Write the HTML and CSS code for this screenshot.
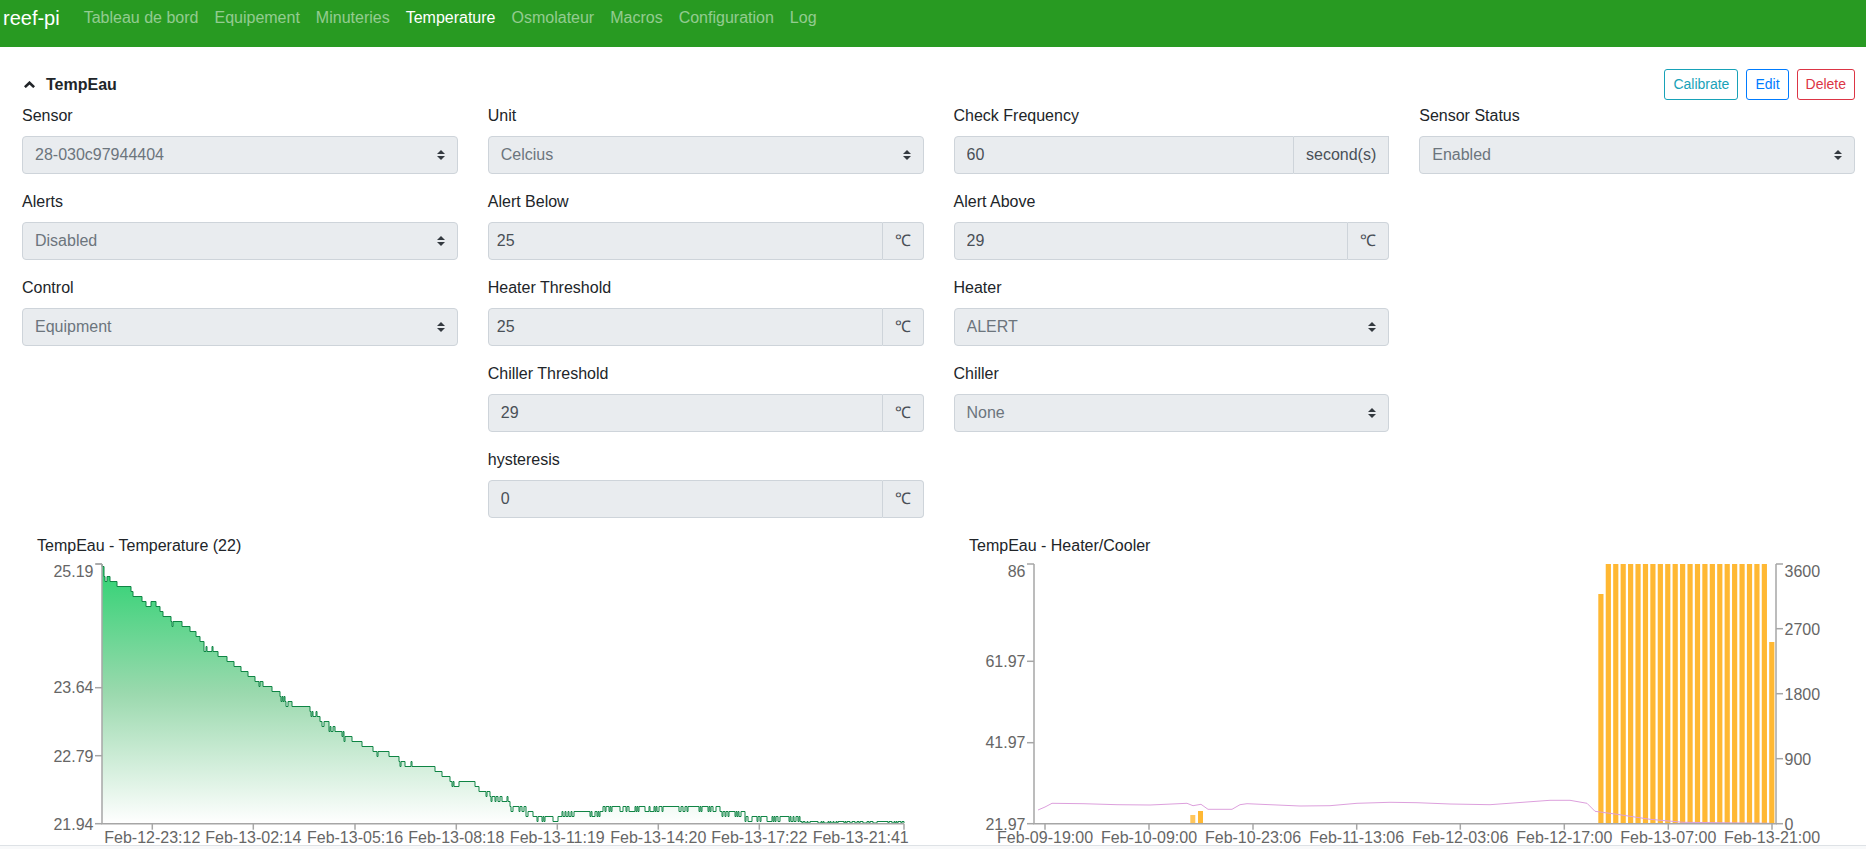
FILE: index.html
```html
<!DOCTYPE html>
<html lang="en">
<head>
    <meta charset="UTF-8">
    <meta name="viewport" content="width=device-width, initial-scale=1.0">
    <title>reef-pi</title>
    <link rel="stylesheet" href="styles.css">
</head>
<body>
    <nav class="navbar">
        <a class="brand">reef-pi</a>
        <a class="nav-link">Tableau de bord</a>
        <a class="nav-link">Equipement</a>
        <a class="nav-link">Minuteries</a>
        <a class="nav-link active">Temperature</a>
        <a class="nav-link">Osmolateur</a>
        <a class="nav-link">Macros</a>
        <a class="nav-link">Configuration</a>
        <a class="nav-link">Log</a>
    </nav>

    <div class="title-row">
        <div class="title">
            <svg class="chevron" viewBox="0 0 10 6"><path d="M0.8 5.4L5 1.4L9.2 5.4"/></svg>
            <b>TempEau</b>
        </div>
        <div class="actions">
            <button class="btn btn-info">Calibrate</button>
            <button class="btn btn-primary">Edit</button>
            <button class="btn btn-danger">Delete</button>
        </div>
    </div>

    <div class="form-grid">
        <div class="field">
            <label>Sensor</label>
            <select class="custom-select" disabled><option>28-030c97944404</option></select>
        </div>
        <div class="field">
            <label>Unit</label>
            <select class="custom-select" disabled><option>Celcius</option></select>
        </div>
        <div class="field">
            <label>Check Frequency</label>
            <div class="input-group">
                <input class="form-control" type="text" value="60" disabled>
                <span class="addon addon-square">second(s)</span>
            </div>
        </div>
        <div class="field">
            <label>Sensor Status</label>
            <select class="custom-select" disabled><option>Enabled</option></select>
        </div>

        <div class="field col-first">
            <label>Alerts</label>
            <select class="custom-select" disabled><option>Disabled</option></select>
        </div>
        <div class="field">
            <label>Alert Below</label>
            <div class="input-group">
                <input class="form-control tight" type="text" value="25" disabled>
                <span class="addon">℃</span>
            </div>
        </div>
        <div class="field">
            <label>Alert Above</label>
            <div class="input-group">
                <input class="form-control" type="text" value="29" disabled>
                <span class="addon">℃</span>
            </div>
        </div>

        <div class="field col-first">
            <label>Control</label>
            <select class="custom-select" disabled><option>Equipment</option></select>
        </div>
        <div class="field">
            <label>Heater Threshold</label>
            <div class="input-group">
                <input class="form-control tight" type="text" value="25" disabled>
                <span class="addon">℃</span>
            </div>
        </div>
        <div class="field">
            <label>Heater</label>
            <select class="custom-select" disabled><option>ALERT</option></select>
        </div>

        <div class="field col-second">
            <label>Chiller Threshold</label>
            <div class="input-group">
                <input class="form-control" type="text" value="29" disabled>
                <span class="addon">℃</span>
            </div>
        </div>
        <div class="field">
            <label>Chiller</label>
            <select class="custom-select" disabled><option>None</option></select>
        </div>

        <div class="field col-second">
            <label>hysteresis</label>
            <div class="input-group">
                <input class="form-control" type="text" value="0" disabled>
                <span class="addon">℃</span>
            </div>
        </div>
    </div>

    <div class="charts">
        <div class="chart chart-temp">
            <div class="chart-title">TempEau - Temperature (22)</div>
            <svg id="temp-chart" class="chart-svg" viewBox="37 557 932 287"></svg>
        </div>
        <div class="chart chart-control">
            <div class="chart-title">TempEau - Heater/Cooler</div>
            <svg id="control-chart" class="chart-svg" viewBox="969 557 897 287"></svg>
        </div>
    </div>

    <div class="page-footer"></div>

    <script src="charts.js"></script>
</body>
</html>
```
FILE: styles.css
```css
html, body {
    margin: 0;
    overflow: hidden;
}
body {
    font-family: "Liberation Sans", Arial, sans-serif;
    font-size: 16px;
    line-height: 24px;
    color: #212529;
    background-color: white;
}
.navbar {
    display: flex;
    align-items: flex-start;
    height: 47px;
    padding-left: 3px;
    background-color: #289a22;
}
.brand {
    font-size: 20px;
    line-height: 30px;
    padding-top: 3px;
    margin-right: 16px;
    color: white;
}
.nav-link {
    padding: 6px 8px;
    color: rgba(255,255,255,0.5);
}
.nav-link.active {
    color: white;
}
.title-row {
    display: flex;
    justify-content: space-between;
    align-items: center;
    padding: 22px 11px 4px 24px;
}
.title {
    display: flex;
    align-items: center;
    gap: 11px;
}
.chevron {
    width: 11px;
    height: 7px;
    fill: none;
    stroke: #212529;
    stroke-width: 2.4;
}
.actions {
    display: flex;
    gap: 8px;
}
.btn {
    font-family: inherit;
    font-size: 14px;
    line-height: 21px;
    padding: 4px 8px;
    background-color: white;
    border: 1px solid;
    border-radius: 3px;
}
.btn-info {
    color: #17a2b8;
    border-color: #17a2b8;
}
.btn-primary {
    color: #007bff;
    border-color: #007bff;
}
.btn-danger {
    color: #dc3545;
    border-color: #dc3545;
}
.form-grid {
    display: grid;
    grid-template-columns: repeat(4, 1fr);
    column-gap: 30px;
    padding: 0 11px 0 22px;
}
.col-first {
    grid-column-start: 1;
}
.col-second {
    grid-column-start: 2;
}
.field {
    margin-bottom: 16px;
    min-width: 0;
}
.field label {
    display: block;
    margin-bottom: 8px;
}
.custom-select, .form-control, .addon {
    box-sizing: border-box;
    height: 38px;
    font-family: inherit;
    font-size: 16px;
    line-height: 24px;
    background-color: #e9ecef;
    border: 1px solid #ced4da;
    opacity: 1;
}
.custom-select {
    display: block;
    width: 100%;
    padding: 6px 28px 6px 12px;
    color: #6c757d;
    border-radius: 4px;
    appearance: none;
    background-image: url("data:image/svg+xml,%3Csvg xmlns='http://www.w3.org/2000/svg' viewBox='0 0 4 5'%3E%3Cpath fill='%23343a40' d='M2 0L0 2h4zm0 5L0 3h4z'/%3E%3C/svg%3E");
    background-repeat: no-repeat;
    background-position: right 12px center;
    background-size: 8px 10px;
}
.input-group {
    display: flex;
}
.form-control {
    flex: 1;
    min-width: 0;
    padding: 6px 12px;
    color: #495057;
    border-radius: 4px 0 0 4px;
}
.form-control.tight {
    padding-left: 8px;
}
.addon {
    padding: 6px 12px;
    color: #495057;
    border-left: 0;
    border-radius: 0 4px 4px 0;
}
.addon-square {
    border-radius: 0;
}
.charts {
    display: flex;
    padding-left: 37px;
    height: 311px;
}
.chart {
    flex: none;
}
.chart-temp {
    width: 932px;
}
.chart-control {
    width: 897px;
}
.chart-title {
    height: 24px;
}
.chart-svg {
    display: block;
    width: 100%;
    height: 287px;
    font-size: 16px;
}
.axis-line {
    fill: none;
    stroke: #a6a6a6;
    stroke-width: 1.5;
}
.axis-label {
    fill: #666;
}
.page-footer {
    height: 5px;
    border-top: 1px solid #dee2e6;
    background-color: #f8f9fa;
}
```
FILE: charts.js
```js
const SVG_NS = 'http://www.w3.org/2000/svg';
const TOP = 563;
const BOTTOM = 822.7;

function add(svg, tag, attrs, text) {
    const el = document.createElementNS(SVG_NS, tag);
    Object.keys(attrs).forEach(key => el.setAttribute(key, attrs[key]));
    if (text !== undefined) el.textContent = text;
    svg.appendChild(el);
    return el;
}

function yLabels(svg, labels, axisX, side) {
    labels.forEach(([label, tickY, textY]) => {
        const tickEnd = axisX + side * 7;
        add(svg, 'path', { class: 'axis-line', d: `M${axisX} ${tickY}H${tickEnd}` });
        add(svg, 'text', {
            class: 'axis-label',
            x: axisX + side * 8.5,
            y: textY + 5.5,
            'text-anchor': side < 0 ? 'end' : 'start'
        }, label);
    });
}

function xLabels(svg, labels) {
    labels.forEach(([label, tickX, textX]) => {
        add(svg, 'path', { class: 'axis-line', d: `M${tickX} ${BOTTOM}V${BOTTOM + 6}` });
        add(svg, 'text', { class: 'axis-label', x: textX, y: 841.5, 'text-anchor': 'middle' }, label);
    });
}

// small seeded random so the noise of the sensor line is always the same
let seed = 42;
function rand() {
    seed = (seed * 16807) % 2147483647;
    return seed / 2147483647;
}

// rough shape of the temperature curve, the samples are quantized below
const TEMP_CURVE = [
    [102, 563], [105, 573], [115, 582], [132, 588], [133, 593], [143, 598], [157, 603],
    [163, 613], [172, 618], [183, 623], [193, 630], [203, 642], [220, 652], [227, 658],
    [240, 667], [248, 673], [263, 683], [277, 690], [292, 703], [312, 708], [322, 718],
    [335, 727], [350, 737], [367, 745], [390, 753], [403, 760], [437, 768], [447, 777],
    [477, 783], [480, 790], [507, 797], [510, 803], [523, 806], [537, 813], [557, 813],
    [573, 810], [600, 808], [613, 804], [633, 803], [673, 803], [687, 805], [717, 807],
    [747, 813], [788, 817], [813, 818], [904, 819]
];

function curveAt(x) {
    for (let i = 1; i < TEMP_CURVE.length; i++) {
        const [x0, y0] = TEMP_CURVE[i - 1];
        const [x1, y1] = TEMP_CURVE[i];
        if (x <= x1) {
            return y0 + (y1 - y0) * (x - x0) / (x1 - x0);
        }
    }
    return 819;
}

function drawTempChart() {
    const svg = document.getElementById('temp-chart');
    const defs = add(svg, 'defs', {});
    const grad = add(defs, 'linearGradient', {
        id: 'temp-fill', gradientUnits: 'userSpaceOnUse', x1: 0, y1: TOP, x2: 0, y2: BOTTOM
    });
    add(grad, 'stop', { offset: '0', 'stop-color': '#2dd272' });
    add(grad, 'stop', { offset: '0.5', 'stop-color': '#9bd9ae' });
    add(grad, 'stop', { offset: '1', 'stop-color': '#ffffff' });

    let line = 'M102 563';
    let burst = 0;
    for (let x = 102; x <= 904; x += 1) {
        const late = x > 470;
        let y = Math.round(curveAt(x) / 5) * 5 + 0.5;
        if (burst > 0) {
            burst--;
            if (rand() < 0.5) y += 5;
        } else if (rand() < (late ? 0.14 : 0.06)) {
            burst = 3 + Math.floor(rand() * (late ? 24 : 8));
        }
        line += `H${x}V${Math.min(y, BOTTOM - 0.7)}`;
    }
    add(svg, 'path', { d: `${line}V${BOTTOM}H102Z`, fill: 'url(#temp-fill)' });
    add(svg, 'path', { d: line, fill: 'none', stroke: '#0f8444', 'stroke-width': 1 });

    add(svg, 'path', { class: 'axis-line', d: `M102 ${TOP}H96M102 ${TOP}V${BOTTOM}H904` });
    yLabels(svg, [
        ['25.19', TOP, 570],
        ['23.64', 686.7, 686.7],
        ['22.79', 754.7, 755.3],
        ['21.94', BOTTOM, 823]
    ], 102, -1);
    xLabels(svg, [
        ['Feb-12-23:12', 152.3, 152.3],
        ['Feb-13-02:14', 253.3, 253.3],
        ['Feb-13-05:16', 355, 355],
        ['Feb-13-08:18', 456.3, 456.3],
        ['Feb-13-11:19', 557.3, 557.3],
        ['Feb-13-14:20', 658.3, 658.3],
        ['Feb-13-17:22', 759.3, 759.3],
        ['Feb-13-21:41', 904, 860.7]
    ]);
}

function drawControlChart() {
    const svg = document.getElementById('control-chart');

    add(svg, 'rect', { x: 1190.3, y: 814, width: 5, height: BOTTOM - 814, fill: '#ffc65c' });
    add(svg, 'rect', { x: 1198, y: 810, width: 5, height: BOTTOM - 810, fill: '#ffb833' });
    for (let i = 0; i < 24; i++) {
        const barTop = i === 0 ? 593 : (i === 23 ? 641 : TOP);
        add(svg, 'rect', {
            x: 1598.3 + i * 7.43, y: barTop, width: 5.2, height: BOTTOM - barTop, fill: '#ffb833'
        });
    }

    const points = [
        [1038, 809], [1045, 806], [1052, 802.3], [1083, 802.7], [1117, 803.7], [1150, 804],
        [1187, 802.3], [1193, 804.7], [1201, 803.3], [1208, 808.3], [1232, 808.3], [1240, 803.7],
        [1247, 802.7], [1300, 805], [1330, 804.7], [1357, 802.3], [1390, 801.3], [1417, 801.7],
        [1450, 803], [1490, 803.7], [1550, 799.3], [1570, 799.3], [1587, 802.3], [1595, 810.3],
        [1617, 813.3], [1650, 818.3], [1683, 821.3], [1770, 822.3]
    ];
    add(svg, 'polyline', {
        points: points.map(p => p.join(',')).join(' '),
        fill: 'none', stroke: '#dda0dd', 'stroke-width': 1
    });

    add(svg, 'path', { class: 'axis-line', d: `M1034 ${TOP}V${BOTTOM}H1776V${TOP}` });
    yLabels(svg, [
        ['86', TOP, 570],
        ['61.97', 660.3, 660],
        ['41.97', 741.7, 741.3],
        ['21.97', BOTTOM, 823]
    ], 1034, -1);
    yLabels(svg, [
        ['3600', TOP, 570],
        ['2700', 627.7, 628.3],
        ['1800', 692.7, 693],
        ['900', 757.7, 758],
        ['0', BOTTOM, 823]
    ], 1776, 1);
    xLabels(svg, [
        ['Feb-09-19:00', 1045, 1045],
        ['Feb-10-09:00', 1149, 1149],
        ['Feb-10-23:06', 1253, 1253],
        ['Feb-11-13:06', 1356.7, 1356.7],
        ['Feb-12-03:06', 1460.3, 1460.3],
        ['Feb-12-17:00', 1564.3, 1564.3],
        ['Feb-13-07:00', 1668.3, 1668.3],
        ['Feb-13-21:00', 1772, 1772]
    ]);
}

drawTempChart();
drawControlChart();
```
